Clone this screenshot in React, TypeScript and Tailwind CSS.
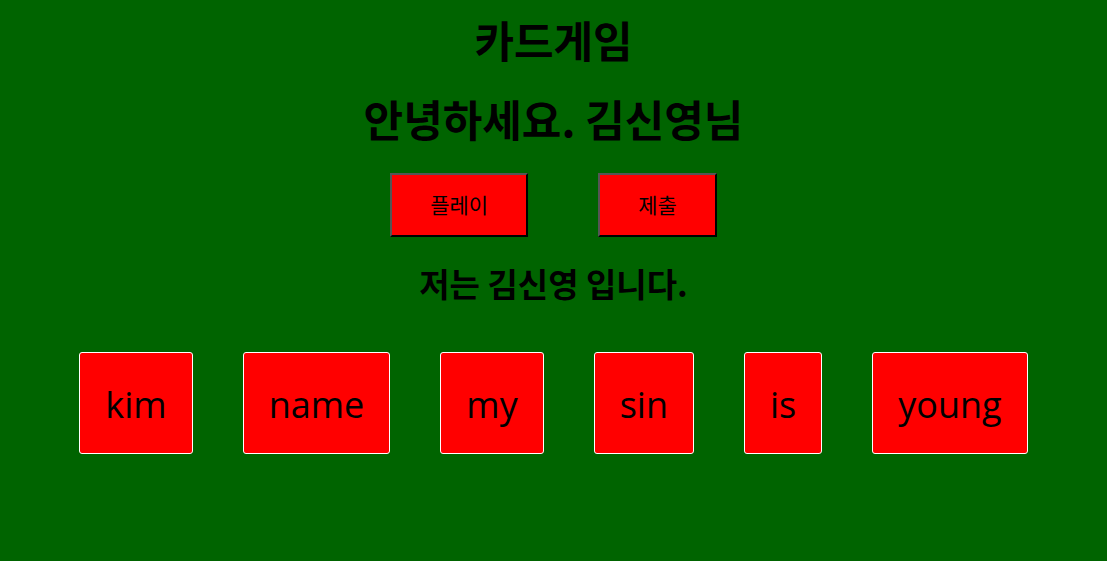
import React from 'react'

const words = ['kim', 'name', 'my', 'sin', 'is', 'young']

const App = () => {
  return (
    <div className="min-h-[561px] w-full bg-[#006400] text-black font-['Noto_Sans_CJK_KR','Noto_Sans',sans-serif] flex flex-col items-center">
      <h1 className="mt-[14px] text-[43px] leading-[50px] font-bold">카드게임</h1>
      <h2 className="mt-[29px] text-[43px] leading-[50px] font-bold">안녕하세요. 김신영님</h2>
      <div className="mt-[30px] flex gap-[70px]">
        <button className="px-[38px] h-[64px] bg-[#ff0000] border-2 border-t-[#555] border-l-[#555] border-b-black border-r-black text-[21px]">플레이</button>
        <button className="px-[38px] h-[64px] bg-[#ff0000] border-2 border-t-[#555] border-l-[#555] border-b-black border-r-black text-[21px]">제출</button>
      </div>
      <h3 className="mt-[26px] text-[33px] leading-[40px] font-bold">저는 김신영 입니다.</h3>
      <div className="mt-[49px] flex gap-[50px]">
        {words.map((w) => (
          <div
            key={w}
            className="h-[102px] px-[25px] pt-[4px] flex items-center justify-center bg-[#ff0000] border border-white rounded-[3px] text-[36px] font-['Open_Sans','Noto_Sans',sans-serif]"
          >
            {w}
          </div>
        ))}
      </div>
    </div>
  )
}

export default App
